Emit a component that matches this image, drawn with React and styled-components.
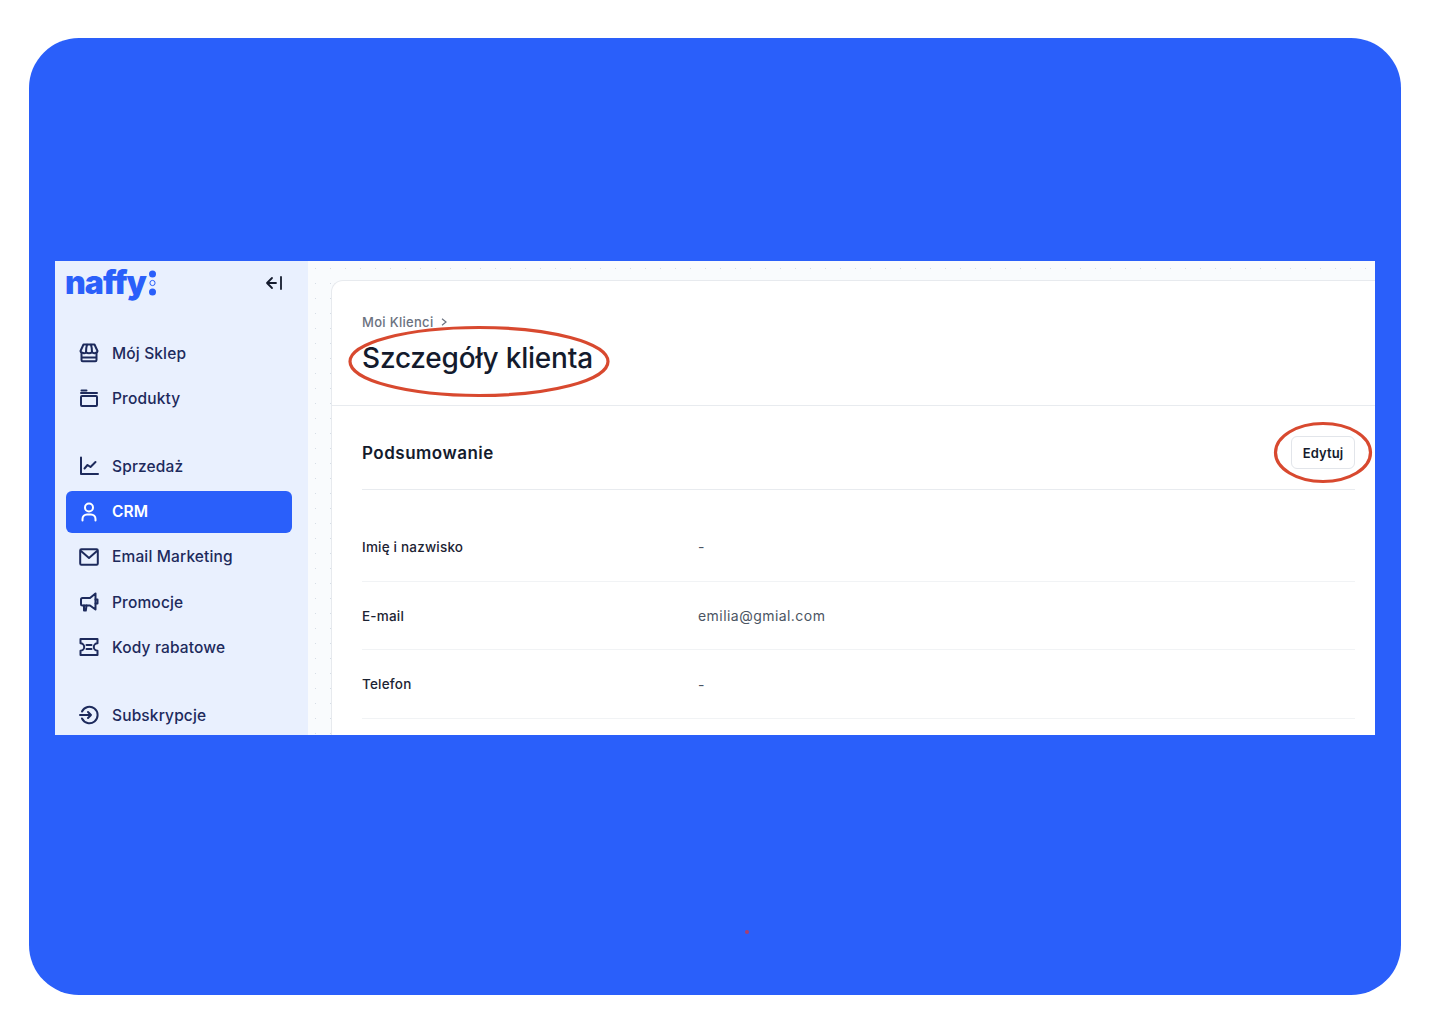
import styled, { createGlobalStyle } from "styled-components";

const GlobalStyle = createGlobalStyle`
  html, body {
    margin: 0;
    padding: 0;
    background: #fff;
  }
  * {
    box-sizing: border-box;
  }
  body {
    font-family: "Inter", "Liberation Sans", sans-serif;
  }
`;

const Page = styled.div`
  width: 1440px;
  height: 1024px;
  padding: 38px 39px 29px 29px;
  overflow: hidden;
`;

const BluePanel = styled.div`
  position: relative;
  height: 957px;
  background: #2a5ffa;
  border-radius: 50px;
  padding: 223px 26px 0;
`;

const RedSpeck = styled.span`
  position: absolute;
  left: 716px;
  top: 892px;
  width: 4px;
  height: 4px;
  border-radius: 50%;
  background: #a8406f;
`;

const Window = styled.div`
  position: relative;
  display: flex;
  width: 1320px;
  height: 474px;
  overflow: hidden;
  background: #fff;
`;

// Sidebar

const Sidebar = styled.aside`
  flex: 0 0 253px;
  background: #e9f0fe;
  padding: 0 16px 0 10px;
`;

const SidebarTop = styled.div`
  display: flex;
  align-items: center;
  justify-content: space-between;
  height: 44px;
  padding-right: 9px;
  margin-bottom: 27px;
`;

const Logo = styled.div`
  display: flex;
  align-items: center;
  gap: 2px;
  color: #2a5ffa;
  font-weight: 900;
  font-size: 32px;
  line-height: 44px;
  letter-spacing: -1px;
`;

const NavGroup = styled.nav`
  display: flex;
  flex-direction: column;
  gap: 3.3px;
  margin-bottom: 26px;
`;

const NavItem = styled.a`
  display: flex;
  align-items: center;
  gap: 13px;
  height: 42px;
  margin-left: 1px;
  padding-left: 13px;
  border-radius: 6px;
  background: ${({ $active }) => ($active ? "#2a5ffa" : "transparent")};
  color: ${({ $active }) => ($active ? "#fff" : "#1d2a5c")};
  font-weight: ${({ $active }) => ($active ? 600 : 500)};
  font-size: 15.5px;
  letter-spacing: 0.15px;
  svg {
    flex: none;
    width: 20px;
    height: 20px;
    fill: none;
    stroke: currentColor;
    stroke-width: 2;
    stroke-linecap: round;
    stroke-linejoin: round;
  }
`;

// Main area

const Main = styled.main`
  flex: 1;
  padding: 19px 0 0 23px;
  background-color: #f9fbfd;
  background-image: radial-gradient(#d6dde6 0.7px, transparent 0.9px);
  background-size: 15px 15px;
`;

const Card = styled.section`
  height: 100%;
  background: #fff;
  border: 1px solid #e7eaee;
  border-width: 1px 0 0 1px;
  border-top-left-radius: 12px;
`;

const CardHeader = styled.header`
  height: 125px;
  padding: 32px 0 0 30px;
  border-bottom: 1px solid #e8ebef;
`;

const Breadcrumb = styled.div`
  display: flex;
  align-items: center;
  gap: 8px;
  color: #6b7280;
  font-weight: 500;
  font-size: 13px;
  line-height: 18px;
  letter-spacing: 0.3px;
  svg {
    fill: none;
    stroke: #6b7280;
    stroke-width: 1.2;
  }
`;

const Title = styled.h1`
  margin: 7px 0 0;
  color: #141b2d;
  font-weight: 500;
  font-size: 28px;
  line-height: 40px;
  letter-spacing: -0.2px;
`;

const CardBody = styled.div`
  padding: 0 20px 0 30px;
`;

const SectionHead = styled.div`
  display: flex;
  align-items: center;
  justify-content: space-between;
  height: 84px;
  padding-top: 10px;
  border-bottom: 1px solid #e8ebef;
  margin-bottom: 23px;
`;

const SectionTitle = styled.h2`
  margin: 0;
  color: #141b2d;
  font-weight: 600;
  font-size: 17px;
  letter-spacing: 0.5px;
`;

const EditButton = styled.button`
  width: 64px;
  height: 33px;
  background: #fff;
  border: 1px solid #e2e5ea;
  border-radius: 6px;
  color: #141b2d;
  font-family: inherit;
  font-weight: 600;
  font-size: 13px;
  letter-spacing: 0.1px;
`;

const Row = styled.div`
  display: flex;
  align-items: center;
  height: 68.7px;
  border-bottom: 1px solid #f1f3f5;
`;

const RowLabel = styled.div`
  flex: 0 0 336px;
  color: #1c2333;
  font-weight: 500;
  font-size: 13.5px;
  letter-spacing: 0.2px;
`;

const RowValue = styled.div`
  color: #4b5563;
  font-size: 14px;
  letter-spacing: 0.45px;
`;

const Annotation = styled.svg`
  position: absolute;
  left: ${({ $x }) => $x}px;
  top: ${({ $y }) => $y}px;
  fill: none;
  stroke: #d8492f;
  stroke-width: 3.2;
`;

const LogoDots = () => (
  <svg width="9" height="26" viewBox="0 0 9 26">
    <circle cx="4.5" cy="4" r="3.5" fill="#2a5ffa" />
    <circle cx="4.5" cy="13" r="2.6" fill="none" stroke="#2a5ffa" strokeWidth="1" />
    <circle cx="4.5" cy="22" r="3.5" fill="#2a5ffa" />
  </svg>
);

const CollapseIcon = () => (
  <svg width="18" height="16" viewBox="0 0 18 16" fill="none" stroke="#141b2d" strokeWidth="1.8" strokeLinecap="round" strokeLinejoin="round">
    <path d="M11 8H2M7 3 2 8l5 5M16 2v12" />
  </svg>
);

const StoreIcon = () => (
  <svg viewBox="0 0 20 20">
    <path d="M4.500 1.500h11l3 6.500c0 2-4 3-5.500 1.200-1.500 1.300-4.500 1.300-6 0C6.500 11 1.500 10 1.500 8z" />
    <path d="M8 1.800C7 4.500 7 7 7 9.200M12 1.800c1 2.700 1 5.200 1 7.400" />
    <path d="M2.500 10.500v6.500a1.200 1.200 0 0 0 1.200 1.200h12.600a1.200 1.200 0 0 0 1.200-1.200v-6.500M3 14.500h14" />
  </svg>
);

const FolderIcon = () => (
  <svg viewBox="0 0 20 20">
    <path d="M2.500 2.500h5M2 5h16" />
    <rect x="2" y="8" width="16" height="10" rx="1" />
  </svg>
);

const ChartIcon = () => (
  <svg viewBox="0 0 20 20">
    <path d="M2 1.500v16.500h17" />
    <path d="m5.500 12.500 3-3.500 3 2 5-5" />
  </svg>
);

const UserIcon = () => (
  <svg viewBox="0 0 20 20">
    <circle cx="10" cy="5.500" r="4" />
    <path d="M3.500 18.500v-1.500a4.500 4.500 0 0 1 4.500-4.500h4a4.500 4.500 0 0 1 4.500 4.500v1.500" />
  </svg>
);

const MailIcon = () => (
  <svg viewBox="0 0 20 20">
    <rect x="1.200" y="2.200" width="17.600" height="15.600" rx="1.200" />
    <path d="m2 4 8 7 8-7" />
  </svg>
);

const MegaphoneIcon = () => (
  <svg viewBox="0 0 20 20">
    <path d="M16.500 1.500v16L11 13.500H3.500A1.500 1.500 0 0 1 2 12V7.500A1.500 1.500 0 0 1 3.500 6H11z" />
    <path d="M5 13.500v5h1.800l.7-5M16.500 7.500h2v4h-2" />
  </svg>
);

const TicketIcon = () => (
  <svg viewBox="0 0 20 20">
    <path d="M1.500 2h17v4.300a3.700 3.700 0 0 0 0 7.400V18h-17v-4.300a3.700 3.700 0 0 0 0-7.400z" />
    <path d="M7.500 8h5M7.500 12h5" />
  </svg>
);

const SubscribeIcon = () => (
  <svg viewBox="0 0 20 20">
    <path d="M3 6.500A8.200 8.200 0 1 1 3 13.500" />
    <path d="M1 10h11M9 7l3 3-3 3" />
  </svg>
);

const navGroups = [
  [
    { label: "Mój Sklep", icon: <StoreIcon /> },
    { label: "Produkty", icon: <FolderIcon /> },
  ],
  [
    { label: "Sprzedaż", icon: <ChartIcon /> },
    { label: "CRM", icon: <UserIcon />, active: true },
    { label: "Email Marketing", icon: <MailIcon /> },
    { label: "Promocje", icon: <MegaphoneIcon /> },
    { label: "Kody rabatowe", icon: <TicketIcon /> },
  ],
  [{ label: "Subskrypcje", icon: <SubscribeIcon /> }],
];

const details = [
  { label: "Imię i nazwisko", value: "-" },
  { label: "E-mail", value: "emilia@gmial.com" },
  { label: "Telefon", value: "-" },
];

export default function App() {
  return (
    <Page>
      <GlobalStyle />
      <BluePanel>
        <Window>
          <Sidebar>
            <SidebarTop>
              <Logo>
                naffy
                <LogoDots />
              </Logo>
              <CollapseIcon />
            </SidebarTop>
            {navGroups.map((group, i) => (
              <NavGroup key={i}>
                {group.map((item) => (
                  <NavItem key={item.label} $active={item.active}>
                    {item.icon}
                    {item.label}
                  </NavItem>
                ))}
              </NavGroup>
            ))}
          </Sidebar>
          <Main>
            <Card>
              <CardHeader>
                <Breadcrumb>
                  <span>Moi Klienci</span>
                  <svg width="6" height="8" viewBox="0 0 6 8">
                    <path d="m1 .8 4 3.200-4 3.200" />
                  </svg>
                </Breadcrumb>
                <Title>Szczegóły klienta</Title>
              </CardHeader>
              <CardBody>
                <SectionHead>
                  <SectionTitle>Podsumowanie</SectionTitle>
                  <EditButton>Edytuj</EditButton>
                </SectionHead>
                {details.map((row) => (
                  <Row key={row.label}>
                    <RowLabel>{row.label}</RowLabel>
                    <RowValue>{row.value}</RowValue>
                  </Row>
                ))}
              </CardBody>
            </Card>
          </Main>
          <Annotation $x={293} $y={64} width="263" height="73" viewBox="0 0 263 73">
            <ellipse cx="131" cy="36.500" rx="129" ry="34" />
          </Annotation>
          <Annotation $x={1218} $y={160} width="100" height="63" viewBox="0 0 100 63">
            <ellipse cx="50" cy="31.500" rx="47.500" ry="29" />
          </Annotation>
        </Window>
        <RedSpeck />
      </BluePanel>
    </Page>
  );
}
